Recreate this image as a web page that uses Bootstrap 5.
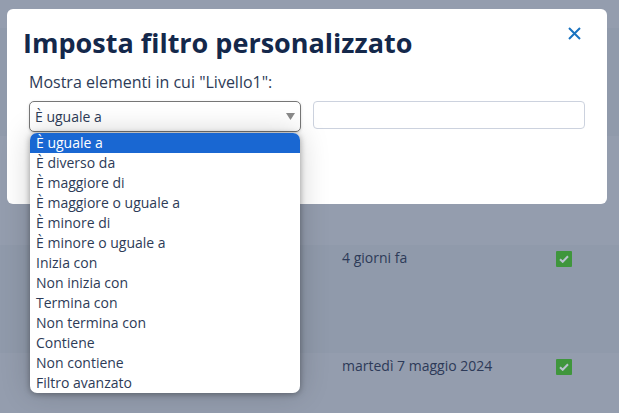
<!DOCTYPE html>
<html lang="it">
<head>
<meta charset="utf-8">
<title>Imposta filtro personalizzato</title>
<link rel="stylesheet" href="https://cdn.jsdelivr.net/npm/bootstrap@5.3.0/dist/css/bootstrap.min.css">
<style>
html,body{height:100%;}
body{background:#949dae;font-family:"Open Sans",sans-serif;color:#2d3b57;overflow:hidden;position:relative;}
.bg-rows{padding-top:28px;}
.bg-line{height:108.4px;font-size:14px;}
.bg-line.alt{background:#909aab;}
.bg-line.tail{height:60px;}
.bg-date{margin-left:342px;width:214px;padding-top:3px;line-height:20px;color:#2d3a58;}
.bg-check{width:16px;height:16px;margin-top:6px;background:#3f963c;border-radius:1px;}
.dlg{position:absolute;left:7px;top:9px;width:600px;height:195px;background:#fff;border-radius:6px;padding:0 22px 0 16px;}
.dlg-title{font-size:27px;font-weight:700;color:#14284b;line-height:36px;margin:16px 0 0;}
.dlg-close{position:absolute;left:561px;top:18px;width:13px;height:13px;padding:0;border:0;background:none;display:block;}
.dlg-label{font-size:16px;line-height:22px;margin:10px 0 8px 6px;color:#2d3b57;}
.dlg-fields{margin-left:6px;gap:12px;align-items:flex-start;}
.op-select{width:272px;height:31px;border:1px solid #767676;border-radius:5px;padding:0 5px;font-size:14px;color:#2d3b57;background:#fff;box-shadow:0 1px 3px rgba(0,0,0,.15);}
.op-value{width:272px;height:28px;border:1px solid #ccd2de;border-radius:4px;padding:0 6px;font-size:14px;}
.op-menu.dropdown-menu{position:absolute;left:1px;top:31px;width:270px;margin:1px 0 0;padding:0;min-width:0;border:0;border-radius:7px;overflow:hidden;box-shadow:0 1px 6px rgba(0,0,0,.35),0 0 30px rgba(0,0,0,.18);font-size:14px;}
.op-menu .dropdown-item{padding:0 6px;height:20px;line-height:20px;color:#2d3b57;}
.op-menu .dropdown-item.active{background:#1967d2;color:#fff;}
.op-select-wrap{position:relative;}
</style>
</head>
<body>
<div class="bg-rows">
  <div class="bg-line alt"></div>
  <div class="bg-line"></div>
  <div class="bg-line alt d-flex"><div class="bg-date">4 giorni fa</div><div class="bg-check d-flex align-items-center justify-content-center"><svg width="10" height="8" viewBox="0 0 10 8"><path d="M1 4.2 3.7 6.8 9 1.2" fill="none" stroke="#b9c2cf" stroke-width="2"/></svg></div></div>
  <div class="bg-line tail d-flex"><div class="bg-date">martedì 7 maggio 2024</div><div class="bg-check d-flex align-items-center justify-content-center"><svg width="10" height="8" viewBox="0 0 10 8"><path d="M1 4.2 3.7 6.8 9 1.2" fill="none" stroke="#b9c2cf" stroke-width="2"/></svg></div></div>
</div>
<div class="dlg">
  <h1 class="dlg-title">Imposta filtro personalizzato</h1>
  <button class="dlg-close" type="button" aria-label="Chiudi"><svg width="13" height="13" viewBox="0 0 13 13" class="d-block"><path d="M1 1 12 12M12 1 1 12" stroke="#1a73c0" stroke-width="2" fill="none"/></svg></button>
  <div class="dlg-label">Mostra elementi in cui "Livello1":</div>
  <div class="d-flex dlg-fields">
    <div class="op-select-wrap">
      <div class="op-select d-flex align-items-center justify-content-between">
        <span>È uguale a</span>
        <svg width="9" height="7" viewBox="0 0 9 7"><path d="M0 0H9L4.5 7Z" fill="#8a8a8a"/></svg>
      </div>
      <ul class="dropdown-menu show op-menu list-unstyled">
        <li><span class="dropdown-item active">È uguale a</span></li>
        <li><span class="dropdown-item">È diverso da</span></li>
        <li><span class="dropdown-item">È maggiore di</span></li>
        <li><span class="dropdown-item">È maggiore o uguale a</span></li>
        <li><span class="dropdown-item">È minore di</span></li>
        <li><span class="dropdown-item">È minore o uguale a</span></li>
        <li><span class="dropdown-item">Inizia con</span></li>
        <li><span class="dropdown-item">Non inizia con</span></li>
        <li><span class="dropdown-item">Termina con</span></li>
        <li><span class="dropdown-item">Non termina con</span></li>
        <li><span class="dropdown-item">Contiene</span></li>
        <li><span class="dropdown-item">Non contiene</span></li>
        <li><span class="dropdown-item">Filtro avanzato</span></li>
      </ul>
    </div>
    <input class="op-value" type="text" aria-label="Valore">
  </div>
</div>
<script src="https://cdn.jsdelivr.net/npm/bootstrap@5.3.0/dist/js/bootstrap.bundle.min.js"></script>
</body>
</html>
